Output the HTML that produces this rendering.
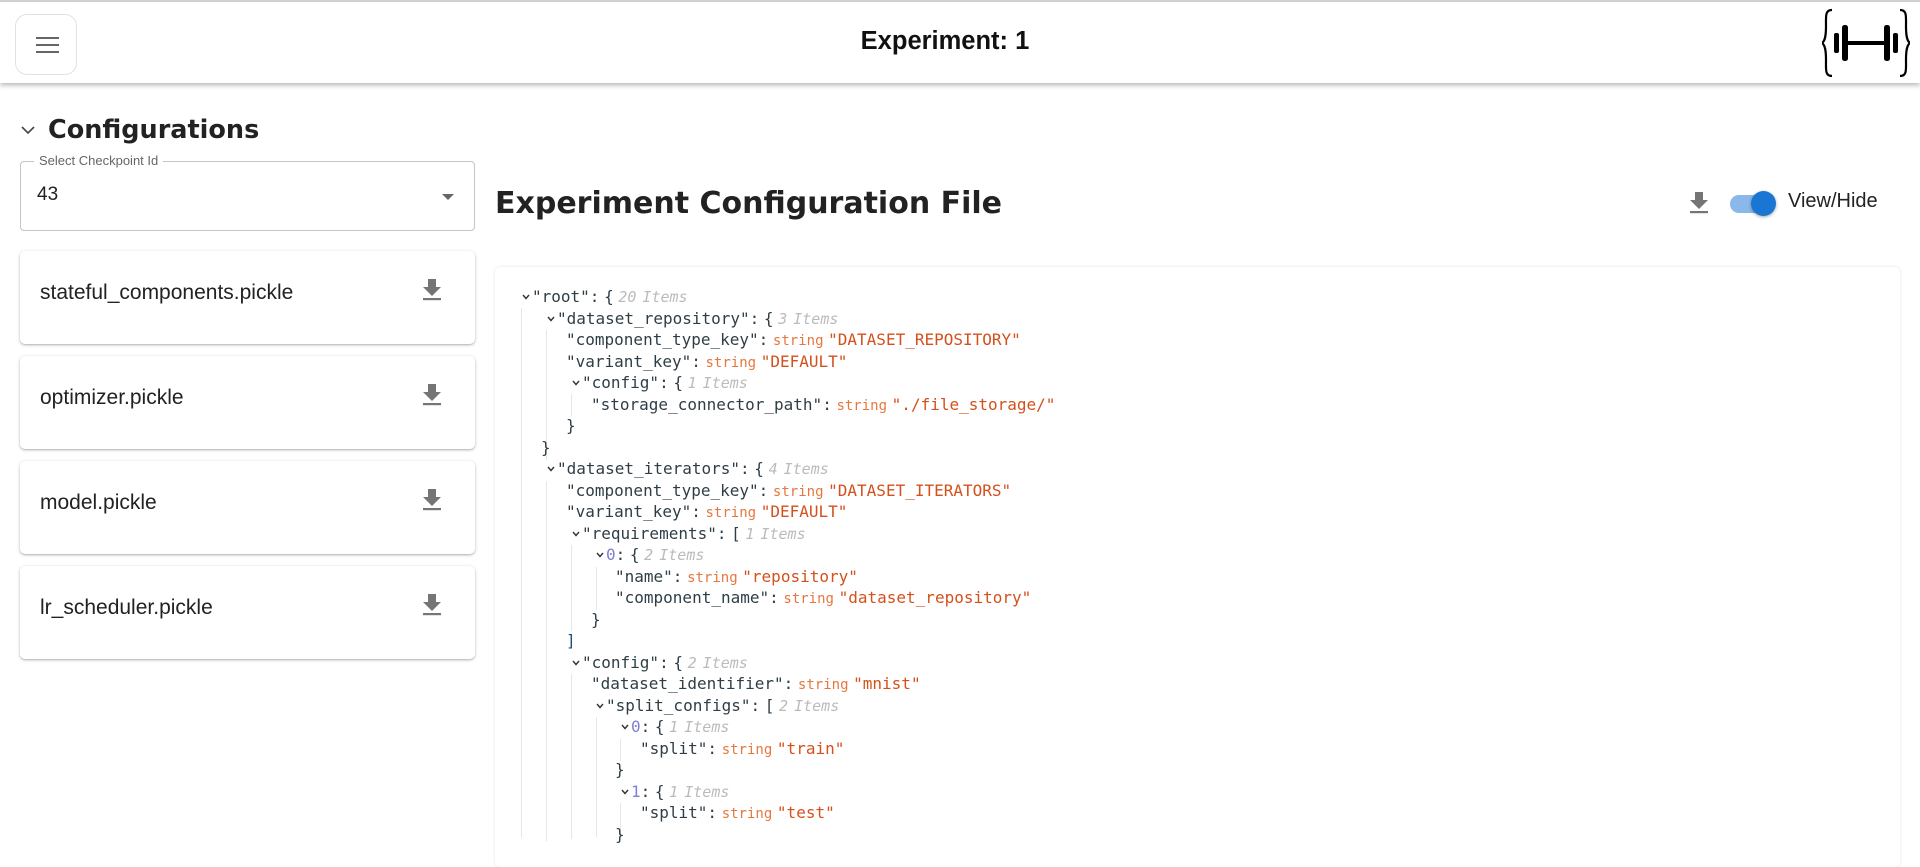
<!DOCTYPE html>
<html><head><meta charset="utf-8">
<style>
*{margin:0;padding:0;box-sizing:border-box}
body{width:1920px;height:833px;overflow:hidden;background:#fff;font-family:"Liberation Sans",sans-serif;position:relative;color:#222}
.hdr{position:absolute;left:0;top:0;width:1920px;height:83px;background:#fff;border-top:2px solid #d0d0d0;box-shadow:0 2px 5px rgba(0,0,0,.3);z-index:2}
.menu{position:absolute;left:15px;top:12px;width:62px;height:61px;border:1px solid #e2e2e2;border-radius:12px}
.menu i{position:absolute;left:20px;width:23px;height:2px;background:#666}
.htitle{position:absolute;left:0;width:1890px;top:25px;text-align:center;font-weight:bold;font-size:25.5px;color:#111}
.conf{position:absolute;left:48px;top:115px;font-family:"DejaVu Sans",sans-serif;font-weight:bold;font-size:25.5px;color:#222}
.sel{position:absolute;left:20px;top:161px;width:455px;height:70px;border:1px solid #c4c4c4;border-radius:4px}
.sel .lab{position:absolute;left:13px;top:-9px;background:#fff;padding:0 5px;font-size:13px;color:#666}
.sel .v{position:absolute;left:16px;top:22px;font-size:19px;color:#222}
.sel .ar{position:absolute;right:20px;top:32px;width:0;height:0;border-left:6px solid transparent;border-right:6px solid transparent;border-top:6px solid #666}
.card{position:absolute;left:20px;width:455px;height:93px;background:#fff;border-radius:5px;box-shadow:0 1px 3px rgba(0,0,0,.25),0 1px 1px rgba(0,0,0,.1)}
.card span{position:absolute;left:20px;top:30px;font-size:21px;color:#222}
.card svg{position:absolute;left:402px;top:28px}
.title{position:absolute;left:495px;top:186px;font-family:"DejaVu Sans",sans-serif;font-weight:bold;font-size:30px;color:#222}
.panel{position:absolute;left:495px;top:267px;width:1405px;height:600px;border-radius:5px;box-shadow:0 0 3px rgba(0,0,0,.12)}
.r{position:absolute;height:22px;line-height:22px;white-space:pre;font-family:"DejaVu Sans Mono",monospace;font-size:16px;color:#2f3e46;word-spacing:-5px}
.s{font-size:14px;color:#e6773f}
.val{color:#d4501c}
.it{color:#bbb;font-style:italic;font-size:15px;word-spacing:-3px}
.ix{color:#7f7fd5}
.cv{position:absolute;top:8px;left:-10px}
.g{position:absolute;width:1px;background:#e6e6e6}
</style></head><body>
<div class="hdr">
 <div class="menu"><i style="top:22px"></i><i style="top:29px"></i><i style="top:36px"></i></div>
 <div class="htitle">Experiment: 1</div>
 <svg style="position:absolute;left:1822px;top:6px" width="88" height="70" viewBox="0 0 88 70">
  <path d="M10 2 C3 2 4 8 4 18 C4 28 3 33 0 35 C3 37 4 42 4 52 C4 62 3 68 10 68" fill="none" stroke="#000" stroke-width="2.2"/>
  <path d="M78 2 C85 2 84 8 84 18 C84 28 85 33 88 35 C85 37 84 42 84 52 C84 62 85 68 78 68" fill="none" stroke="#000" stroke-width="2.2"/>
  <rect x="12" y="25" width="5" height="20" rx="2"/><rect x="20" y="17" width="6" height="36" rx="2.5"/>
  <rect x="26" y="33" width="36" height="4"/>
  <rect x="62" y="17" width="6" height="36" rx="2.5"/><rect x="71" y="25" width="5" height="20" rx="2"/>
 </svg>
</div>
<svg style="position:absolute;left:21px;top:126px" width="14" height="9"><path d="M1 1 L7 7 L13 1" fill="none" stroke="#444" stroke-width="1.6"/></svg>
<div class="conf">Configurations</div>
<div class="sel"><div class="lab">Select Checkpoint Id</div><div class="v">43</div><div class="ar"></div></div>

<div class="card" style="top:251px"><span>stateful_components.pickle</span><svg width="20" height="22" viewBox="0 0 20 22"><path d="M6 0h8v8h5l-9 9-9-9h5z" fill="#757575"/><rect x="1" y="19" width="18" height="2.2" fill="#757575"/></svg></div>
<div class="card" style="top:356px"><span>optimizer.pickle</span><svg width="20" height="22" viewBox="0 0 20 22"><path d="M6 0h8v8h5l-9 9-9-9h5z" fill="#757575"/><rect x="1" y="19" width="18" height="2.2" fill="#757575"/></svg></div>
<div class="card" style="top:461px"><span>model.pickle</span><svg width="20" height="22" viewBox="0 0 20 22"><path d="M6 0h8v8h5l-9 9-9-9h5z" fill="#757575"/><rect x="1" y="19" width="18" height="2.2" fill="#757575"/></svg></div>
<div class="card" style="top:566px"><span>lr_scheduler.pickle</span><svg width="20" height="22" viewBox="0 0 20 22"><path d="M6 0h8v8h5l-9 9-9-9h5z" fill="#757575"/><rect x="1" y="19" width="18" height="2.2" fill="#757575"/></svg></div>

<div class="title">Experiment Configuration File</div>
<svg style="position:absolute;left:1689px;top:192px" width="20" height="22" viewBox="0 0 20 22"><path d="M6 0h8v8h5l-9 9-9-9h5z" fill="#757575"/><rect x="1" y="19" width="18" height="2.2" fill="#757575"/></svg>
<div style="position:absolute;left:1730px;top:195px;width:44px;height:18px;border-radius:9px;background:#8ab8ea"></div>
<div style="position:absolute;left:1751px;top:191px;width:25px;height:25px;border-radius:50%;background:#1976d2;box-shadow:0 1px 3px rgba(0,0,0,.35)"></div>
<div style="position:absolute;left:1788px;top:190px;font-size:20px;color:#222">View/Hide</div>

<div class="panel"></div>

<div class="g" style="left:521px;top:308px;height:530px"></div>
<div class="g" style="left:546px;top:330px;height:130px"></div>
<div class="g" style="left:546px;top:481px;height:360px"></div>
<div class="g" style="left:571px;top:394px;height:22px"></div>
<div class="g" style="left:571px;top:545px;height:86px"></div>
<div class="g" style="left:571px;top:674px;height:165px"></div>
<div class="g" style="left:596px;top:567px;height:43px"></div>
<div class="g" style="left:596px;top:717px;height:120px"></div>
<div class="g" style="left:620px;top:739px;height:22px"></div>
<div class="g" style="left:620px;top:803px;height:35px"></div>

<div class="r" style="left:532px;top:286px"><svg class="cv" width="8" height="6"><path d="M1 1L4 4.5L7 1" fill="none" stroke="#333" stroke-width="1.4"/></svg>"root": { <span class="it">20 Items</span></div>
<div class="r" style="left:557px;top:308px"><svg class="cv" width="8" height="6"><path d="M1 1L4 4.5L7 1" fill="none" stroke="#333" stroke-width="1.4"/></svg>"dataset_repository": { <span class="it">3 Items</span></div>
<div class="r" style="left:566px;top:329px">"component_type_key": <span class="s">string</span> <span class="val">"DATASET_REPOSITORY"</span></div>
<div class="r" style="left:566px;top:351px">"variant_key": <span class="s">string</span> <span class="val">"DEFAULT"</span></div>
<div class="r" style="left:582px;top:372px"><svg class="cv" width="8" height="6"><path d="M1 1L4 4.5L7 1" fill="none" stroke="#333" stroke-width="1.4"/></svg>"config": { <span class="it">1 Items</span></div>
<div class="r" style="left:591px;top:394px">"storage_connector_path": <span class="s">string</span> <span class="val">"./file_storage/"</span></div>
<div class="r" style="left:566px;top:415px">}</div>
<div class="r" style="left:541px;top:437px">}</div>
<div class="r" style="left:557px;top:458px"><svg class="cv" width="8" height="6"><path d="M1 1L4 4.5L7 1" fill="none" stroke="#333" stroke-width="1.4"/></svg>"dataset_iterators": { <span class="it">4 Items</span></div>
<div class="r" style="left:566px;top:480px">"component_type_key": <span class="s">string</span> <span class="val">"DATASET_ITERATORS"</span></div>
<div class="r" style="left:566px;top:501px">"variant_key": <span class="s">string</span> <span class="val">"DEFAULT"</span></div>
<div class="r" style="left:582px;top:523px"><svg class="cv" width="8" height="6"><path d="M1 1L4 4.5L7 1" fill="none" stroke="#333" stroke-width="1.4"/></svg>"requirements": [ <span class="it">1 Items</span></div>
<div class="r" style="left:606px;top:544px"><svg class="cv" width="8" height="6"><path d="M1 1L4 4.5L7 1" fill="none" stroke="#333" stroke-width="1.4"/></svg><span class="ix">0</span>: { <span class="it">2 Items</span></div>
<div class="r" style="left:615px;top:566px">"name": <span class="s">string</span> <span class="val">"repository"</span></div>
<div class="r" style="left:615px;top:587px">"component_name": <span class="s">string</span> <span class="val">"dataset_repository"</span></div>
<div class="r" style="left:591px;top:609px">}</div>
<div class="r" style="left:566px;top:630px;color:#1f4e79">]</div>
<div class="r" style="left:582px;top:652px"><svg class="cv" width="8" height="6"><path d="M1 1L4 4.5L7 1" fill="none" stroke="#333" stroke-width="1.4"/></svg>"config": { <span class="it">2 Items</span></div>
<div class="r" style="left:591px;top:673px">"dataset_identifier": <span class="s">string</span> <span class="val">"mnist"</span></div>
<div class="r" style="left:606px;top:695px"><svg class="cv" width="8" height="6"><path d="M1 1L4 4.5L7 1" fill="none" stroke="#333" stroke-width="1.4"/></svg>"split_configs": [ <span class="it">2 Items</span></div>
<div class="r" style="left:631px;top:716px"><svg class="cv" width="8" height="6"><path d="M1 1L4 4.5L7 1" fill="none" stroke="#333" stroke-width="1.4"/></svg><span class="ix">0</span>: { <span class="it">1 Items</span></div>
<div class="r" style="left:640px;top:738px">"split": <span class="s">string</span> <span class="val">"train"</span></div>
<div class="r" style="left:615px;top:759px">}</div>
<div class="r" style="left:631px;top:781px"><svg class="cv" width="8" height="6"><path d="M1 1L4 4.5L7 1" fill="none" stroke="#333" stroke-width="1.4"/></svg><span class="ix">1</span>: { <span class="it">1 Items</span></div>
<div class="r" style="left:640px;top:802px">"split": <span class="s">string</span> <span class="val">"test"</span></div>
<div class="r" style="left:615px;top:824px">}</div>
</body></html>
